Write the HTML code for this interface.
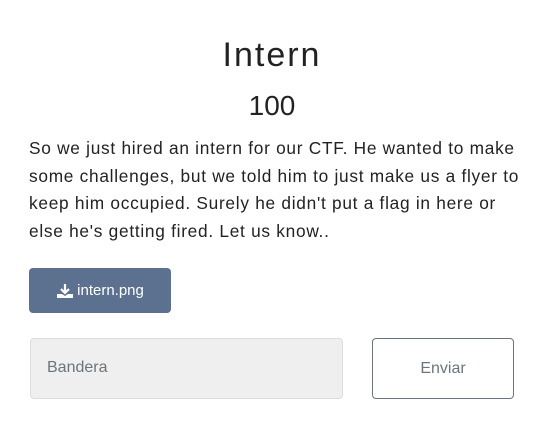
<!DOCTYPE html>
<html><head><style>
body{margin:0;width:536px;height:445px;background:#fff;font-family:"Liberation Sans",sans-serif;color:#212529;position:relative;overflow:hidden}
.t{position:absolute;left:0;width:544px;text-align:center}
#h{top:36px;font-size:34px;letter-spacing:2px;font-weight:300;color:#222}
#n{top:90px;font-size:28px;color:#222}
#p{position:absolute;left:29px;top:135px;width:500px;font-size:17.3px;letter-spacing:0.72px;line-height:27.5px;color:#222;white-space:nowrap}
#b{position:absolute;left:29px;top:268px;width:142px;height:45px;background:#5b718f;border-radius:4px;color:#fff;font-size:15px;display:flex;align-items:center;justify-content:center;gap:3px}
#i{position:absolute;left:30px;top:338px;width:311px;height:59px;background:#efefef;border:1px solid #ddd;border-radius:4px;box-sizing:content-box}
#i span{position:absolute;left:16px;top:20px;font-size:16px;color:#6c757d}
#e{position:absolute;left:372px;top:338px;width:140px;height:59px;border:1px solid #6c757d;border-radius:4px;display:flex;align-items:center;justify-content:center;font-size:16px;color:#6c757d}
</style></head><body>
<div class="t" id="h">Intern</div>
<div class="t" id="n">100</div>
<div id="p">So we just hired an intern for our CTF. He wanted to make<br>some challenges, but we told him to just make us a flyer to<br>keep him occupied. Surely he didn't put a flag in here or<br>else he's getting fired. Let us know..</div>
<div id="b"><svg width="18" height="16" viewBox="0 0 18 16"><path d="M9 1v9M5 6l4 4 4-4" stroke="#fff" stroke-width="2.2" fill="none"/><path d="M1 11h5l3 2 3-2h5v4H1z" fill="#fff"/></svg>intern.png</div>
<div id="i"><span>Bandera</span></div>
<div id="e">Enviar</div>
</body></html>
